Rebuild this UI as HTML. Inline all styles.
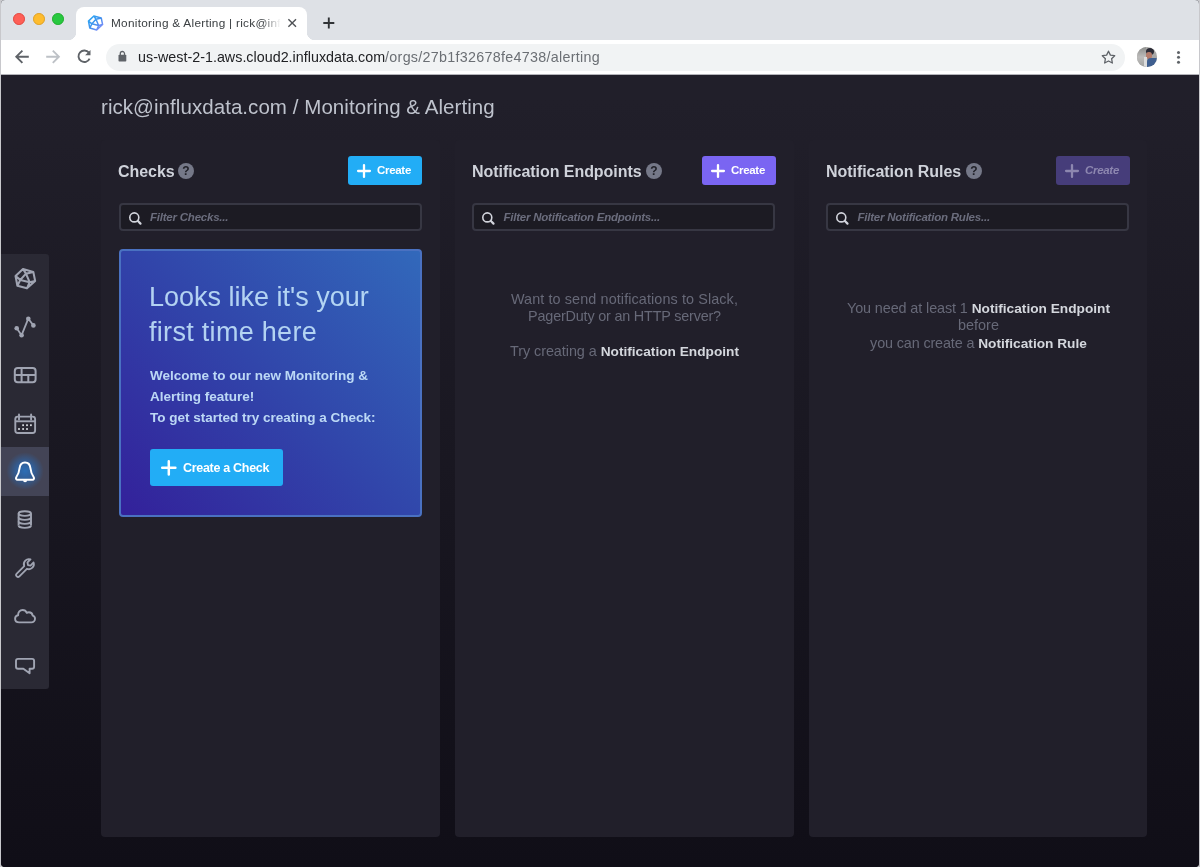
<!DOCTYPE html>
<html>
<head>
<meta charset="utf-8">
<title>Monitoring &amp; Alerting</title>
<style>
*{box-sizing:border-box;margin:0;padding:0}
html,body{width:1200px;height:867px;overflow:hidden;background:#c8c8cc;font-family:"Liberation Sans",sans-serif;}
.abs{position:absolute}
#win{position:absolute;left:1px;top:0;width:1198px;height:867px;overflow:hidden;border-radius:4px 4px 4px 4px;background:#0f0e15}
/* ---------- browser chrome ---------- */
#tabbar{position:absolute;left:0;top:0;width:1198px;height:40px;background:#dee1e6}
.tl{position:absolute;top:13.3px;width:11.7px;height:11.7px;border-radius:50%}
#tab{position:absolute;left:75px;top:7px;width:231px;height:33px;background:#fff;border-radius:8px 8px 0 0}
#tab:before,#tab:after{content:"";position:absolute;bottom:0;width:8px;height:8px;background:radial-gradient(circle at 0 0,transparent 8px,#fff 8.5px)}
#tab:before{left:-8px}
#tab:after{right:-8px;background:radial-gradient(circle at 100% 0,transparent 8px,#fff 8.5px)}
#tabtitle{position:absolute;left:35px;top:7.2px;width:172px;height:18px;overflow:hidden;white-space:nowrap;font-size:11.8px;color:#3c4043;line-height:18px;letter-spacing:0.27px}
#tabfade{position:absolute;left:186px;top:6px;width:22px;height:22px;background:linear-gradient(90deg,rgba(255,255,255,0),#fff 85%)}
#toolbar{position:absolute;left:0;top:40px;width:1198px;height:35px;background:#fff;border-bottom:1px solid #b4b4ba}
#toolbar svg.ico{z-index:2}
#omni{position:absolute;left:105px;top:3.5px;width:1019px;height:27px;border-radius:13.5px;background:#f1f3f4}
#url{position:absolute;left:32px;top:4px;font-size:14.3px;line-height:18px;color:#202124;white-space:nowrap;letter-spacing:0.02px}
#url span{color:#6b6f74;letter-spacing:0.29px}
/* ---------- page ---------- */
#page{position:absolute;left:0;top:75px;width:1198px;height:792px;background:linear-gradient(180deg,#211f2a 0%,#211f2a 3%,#100e17 100%)}
#title{position:absolute;left:100px;top:19px;font-size:20.5px;line-height:26px;color:#bec2cc;white-space:nowrap;letter-spacing:0.06px}
.panel{position:absolute;top:65px;width:339px;height:697px;background:#211f2a;border-radius:4px}
.ph{position:absolute;left:17px;top:21px;font-size:16px;font-weight:bold;color:#cfd2da;line-height:22px;white-space:nowrap;letter-spacing:-0.05px}
.q{position:absolute;top:23px;width:16px;height:16px;border-radius:50%;background:#757888;color:#202028;font-size:12px;font-weight:bold;text-align:center;line-height:16px}
.btn{position:absolute;top:16px;height:29px;border-radius:3px;color:#fff;font-size:11.5px;font-weight:bold;line-height:29.4px;white-space:nowrap;letter-spacing:-0.3px}
.filter{position:absolute;left:18px;top:63px;width:303px;height:28px;border:2px solid #373743;border-radius:4px;background:#1c1b23}
.filter span{position:absolute;left:29px;top:0;line-height:25px;font-size:11.5px;font-style:italic;font-weight:bold;color:#6b6d7d;white-space:nowrap;letter-spacing:-0.22px}
.empty{position:absolute;left:0;width:339px;text-align:center;font-size:14.4px;line-height:17.4px;color:#676978}
.empty b{color:#d4d7dd;font-size:13.7px}
/* sidebar */
#nav{position:absolute;left:0;top:179px;width:48px;height:434.5px;background:#2a2934;border-radius:0 3px 3px 0}

/* force grayscale AA */
#win{will-change:transform}
.ico{position:absolute;overflow:visible}
#card{position:absolute;left:18px;top:109px;width:303px;height:268px;border-radius:4px;border:2px solid #4a71c1;background:linear-gradient(45deg,#33209a 0%,#3145aa 50%,#3269bb 100%);background-origin:border-box}
#card h2{position:absolute;left:28px;top:29px;font-weight:normal;font-size:27px;line-height:34.5px;color:rgba(197,230,252,.88);white-space:nowrap}
#card p{position:absolute;left:29px;top:113.6px;font-size:13.5px;font-weight:bold;line-height:21.25px;color:rgba(200,229,252,.92);white-space:nowrap}
#cbtn{position:absolute;left:29px;top:198px;width:133px;height:37px;border-radius:3px;background:#22adf6;color:#fff;font-size:12.5px;font-weight:bold;line-height:38px;letter-spacing:-0.3px}
#cbtn span{position:absolute;left:33px;top:0}
#navact{position:absolute;left:0;top:193px;width:48px;height:48.5px;background:#434456}
#navglow{position:absolute;left:4px;top:197px;width:40px;height:40px;border-radius:50%;background:radial-gradient(circle,rgba(38,120,205,.8) 0%,rgba(38,112,195,.6) 30%,rgba(40,105,185,0) 66%)}
</style>
</head>
<body>
<div id="win">
  <div id="tabbar">
    <div class="tl" style="left:12px;background:#fe5f57;border:0.5px solid #e2463f"></div>
    <div class="tl" style="left:32px;background:#febc2e;border:0.5px solid #dfa023"></div>
    <div class="tl" style="left:51px;background:#28c840;border:0.5px solid #1dad2b"></div>
    <div id="tab">
      <div id="tabtitle">Monitoring &amp; Alerting | rick@influxdata.com</div>
      <div id="tabfade"></div>
    </div>
    <svg class="ico" style="left:0;top:0" width="340" height="40" viewBox="0 0 340 40"><defs><linearGradient id="fg" gradientUnits="userSpaceOnUse" x1="87" y1="15" x2="103" y2="31"><stop offset="0" stop-color="#22adf6"/><stop offset="0.5" stop-color="#4591ed"/><stop offset="1" stop-color="#9b8cff"/></linearGradient></defs><path d="M92.84 15.93 L100.27 18.06 L101.60 24.56 L95.69 29.93 L88.79 28.01 L87.47 21.11ZM94.96 19.32 L90.92 23.83 L97.62 25.49ZM92.84 15.93 L94.96 19.32 L100.27 18.06M101.60 24.56 L97.62 25.49 L95.69 29.93M88.79 28.01 L90.92 23.83 L87.47 21.11" fill="none" stroke="url(#fg)" stroke-width="1.5" stroke-linejoin="round"/><path d="M287.4 19.2L295 26.8M295 19.2L287.4 26.8" stroke="#505357" stroke-width="1.4" fill="none"/><path d="M327.8 17.5V28.5M322.3 23H333.3" stroke="#303336" stroke-width="1.9" fill="none"/></svg>
  </div>
  <div id="toolbar">
    <svg class="ico" style="left:0;top:0" width="1198" height="34" viewBox="0 0 1198 34"><path d="M27.8 16.7H15.6M21.4 10.6L15.3 16.7L21.4 22.8" stroke="#5f6368" stroke-width="1.9" fill="none"/><path d="M45.2 16.7H57.6M51.8 10.6L57.9 16.7L51.8 22.8" stroke="#bdc1c6" stroke-width="1.9" fill="none"/><path d="M87.9 12.7A5.8 5.8 0 1 0 88.6 18.6" stroke="#5f6368" stroke-width="1.9" fill="none"/><path d="M89.5 9.9V15.3H84.1Z" fill="#5f6368"/><rect x="117.5" y="14.8" width="7.8" height="6.8" rx="0.8" fill="#5f6368"/><path d="M119.3 15V13.6A2.1 2.1 0 0 1 123.5 13.6V15" stroke="#5f6368" stroke-width="1.3" fill="none"/><path d="M1107.5 11.2L1109.4 15.1L1113.7 15.7L1110.6 18.7L1111.35 23L1107.5 21L1103.65 23L1104.4 18.7L1101.3 15.7L1105.6 15.1Z" stroke="#5f6368" stroke-width="1.3" fill="none" stroke-linejoin="round"/><circle cx="1177.5" cy="12.5" r="1.5" fill="#5f6368"/><circle cx="1177.5" cy="17.3" r="1.5" fill="#5f6368"/><circle cx="1177.5" cy="22.2" r="1.5" fill="#5f6368"/></svg><div style="position:absolute;left:1136.2px;top:7px;width:19.6px;height:19.6px;border-radius:50%;overflow:hidden;background:#a9a8a6"><div style="position:absolute;left:0;top:0;width:9px;height:20px;background:linear-gradient(180deg,#8c8d8b,#bdbcbb 50%,#a3a3a1)"></div><div style="position:absolute;left:8.5px;top:1px;width:8px;height:7px;border-radius:50%;background:#2b2b36"></div><div style="position:absolute;left:9px;top:5px;width:6px;height:7px;border-radius:45%;background:#b47c6c"></div><div style="position:absolute;left:9.5px;top:11px;width:11px;height:9px;border-radius:4px 2px 0 0;background:#3f5f90"></div><div style="position:absolute;left:6.5px;top:10px;width:3.5px;height:10px;background:#dcdcdc"></div></div>
    <div id="omni">
      <div id="url">us-west-2-1.aws.cloud2.influxdata.com<span>/orgs/27b1f32678fe4738/alerting</span></div>
    </div>
  </div>
  <div id="page">
    <div id="title">rick@influxdata.com / Monitoring &amp; Alerting</div>

    <div class="panel" id="p1" style="left:100px">
      <div class="ph">Checks</div>
      <div class="q" style="left:77px">?</div>
      <div class="btn" style="left:247px;width:74px;background:#22adf6"><svg class="ico" style="left:8.8px;top:8.1px" width="14" height="14" viewBox="0 0 14 14"><path d="M7 1.1V12.9M1.1 7H12.9" stroke="currentColor" stroke-width="2.3" fill="none" stroke-linecap="round"/></svg><span style="position:absolute;left:29px">Create</span></div>
      <div class="filter"><svg class="ico" style="left:7px;top:6.5px" width="15" height="15" viewBox="0 0 15 15"><circle cx="6.3" cy="5.4" r="4.5" fill="none" stroke="#d2d4dc" stroke-width="1.6"/><path d="M9.9 9L12.5 11.6" stroke="#d2d4dc" stroke-width="2.2" stroke-linecap="round"/></svg><span>Filter Checks...</span></div>

      <div id="card">
        <h2>Looks like it's your<br><span style="letter-spacing:0.3px">first time here</span></h2>
        <p>Welcome to our new Monitoring &amp;<br>Alerting feature!<br>To get started try creating a Check:</p>
        <div id="cbtn"><svg class="ico" style="left:11.399999999999999px;top:10.8px" width="15.6" height="15.6" viewBox="0 0 15.6 15.6"><path d="M7.8 1.2V14.4M1.2 7.8H14.4" stroke="#fff" stroke-width="2.5" fill="none" stroke-linecap="round"/></svg><span>Create a Check</span></div>
      </div>
    </div>

    <div class="panel" id="p2" style="left:454px">
      <div class="ph">Notification Endpoints</div>
      <div class="q" style="left:191px">?</div>
      <div class="btn" style="left:247px;width:74px;background:#7a65f2"><svg class="ico" style="left:8.8px;top:8.1px" width="14" height="14" viewBox="0 0 14 14"><path d="M7 1.1V12.9M1.1 7H12.9" stroke="currentColor" stroke-width="2.3" fill="none" stroke-linecap="round"/></svg><span style="position:absolute;left:29px">Create</span></div>
      <div class="filter" style="left:17.4px"><svg class="ico" style="left:7px;top:6.5px" width="15" height="15" viewBox="0 0 15 15"><circle cx="6.3" cy="5.4" r="4.5" fill="none" stroke="#d2d4dc" stroke-width="1.6"/><path d="M9.9 9L12.5 11.6" stroke="#d2d4dc" stroke-width="2.2" stroke-linecap="round"/></svg><span>Filter Notification Endpoints...</span></div>
      <div class="empty" style="top:151px"><span style="letter-spacing:0.1px">Want to send notifications to Slack,</span><br><span style="letter-spacing:-0.19px">PagerDuty or an HTTP server?</span><br><br><span style="letter-spacing:-0.05px">Try creating a </span><b>Notification Endpoint</b></div>
    </div>

    <div class="panel" id="p3" style="left:808px;width:338.4px">
      <div class="ph">Notification Rules</div>
      <div class="q" style="left:157px">?</div>
      <div class="btn" style="left:247px;width:74px;background:#463d7a;color:#8d87b0;font-style:italic"><svg class="ico" style="left:8.8px;top:8.1px" width="14" height="14" viewBox="0 0 14 14"><path d="M7 1.1V12.9M1.1 7H12.9" stroke="currentColor" stroke-width="2.3" fill="none" stroke-linecap="round"/></svg><span style="position:absolute;left:29px">Create</span></div>
      <div class="filter" style="left:17.4px"><svg class="ico" style="left:7px;top:6.5px" width="15" height="15" viewBox="0 0 15 15"><circle cx="6.3" cy="5.4" r="4.5" fill="none" stroke="#d2d4dc" stroke-width="1.6"/><path d="M9.9 9L12.5 11.6" stroke="#d2d4dc" stroke-width="2.2" stroke-linecap="round"/></svg><span>Filter Notification Rules...</span></div>
      <div class="empty" style="top:160px"><span style="letter-spacing:-0.1px">You need at least 1 </span><b>Notification Endpoint</b><br>before<br><span style="letter-spacing:-0.14px">you can create a </span><b>Notification Rule</b></div>
    </div>

    <div id="nav"><div id="navact"></div><div id="navglow"></div><svg class="ico" style="left:0;top:0" width="48" height="434" viewBox="0 0 48 434"><g transform="translate(24.3 24.6) scale(0.92) translate(-24.3 -24.6)"><path d="M21.8 14.1 L33.0 17.3 L35.0 27.1 L26.1 35.2 L15.7 32.3 L13.7 21.9ZM25.0 19.2 L18.9 26.0 L29.0 28.5ZM21.8 14.1 L25.0 19.2 L33.0 17.3M35.0 27.1 L29.0 28.5 L26.1 35.2M15.7 32.3 L18.9 26.0 L13.7 21.9" fill="none" stroke="#a0a4b2" stroke-width="2.25" stroke-linejoin="round"/></g><path d="M15.7 74.2 L20.6 81.2 L27.3 64.7 L32.4 71.4" fill="none" stroke="#a0a4b2" stroke-width="1.8" stroke-linejoin="round"/><circle cx="15.7" cy="74.2" r="2.3" fill="#a0a4b2"/><circle cx="20.6" cy="81.2" r="2.3" fill="#a0a4b2"/><circle cx="27.3" cy="64.7" r="2.3" fill="#a0a4b2"/><circle cx="32.4" cy="71.4" r="2.3" fill="#a0a4b2"/><rect x="13.8" y="114" width="20.8" height="14.2" rx="3" fill="none" stroke="#a0a4b2" stroke-width="2"/><path d="M13.8 120.9H34.6M20.6 114V128.2M27.3 120.9V128.2" fill="none" stroke="#a0a4b2" stroke-width="2"/><rect x="14.3" y="162.6" width="19.8" height="16.4" rx="2.5" fill="none" stroke="#a0a4b2" stroke-width="1.9"/><path d="M14.3 167.3H34.1" stroke="#a0a4b2" stroke-width="1.9"/><path d="M18 160.4V165.6M30.1 160.4V165.6" stroke="#a0a4b2" stroke-width="1.9" stroke-linecap="round"/><rect x="21.2" y="170.3" width="1.8" height="1.8" fill="#d4d7dd"/><rect x="25.1" y="170.3" width="1.8" height="1.8" fill="#d4d7dd"/><rect x="29.0" y="170.3" width="1.8" height="1.8" fill="#d4d7dd"/><rect x="17.1" y="174.1" width="1.8" height="1.8" fill="#d4d7dd"/><rect x="21.2" y="174.1" width="1.8" height="1.8" fill="#d4d7dd"/><rect x="25.1" y="174.1" width="1.8" height="1.8" fill="#d4d7dd"/><path d="M24.0 208.4 C20.3 208.4 18.9 211.0 18.6 214.0 C18.2 217.6 17.6 220.0 15.4 223.0 C14.5 224.3 15.1 225.8 16.6 225.8 L31.4 225.8 C32.9 225.8 33.5 224.3 32.6 223.0 C30.4 220.0 29.8 217.6 29.4 214.0 C29.1 211.0 27.7 208.4 24.0 208.4Z" fill="none" stroke="#fff" stroke-width="2" stroke-linejoin="round"/><path d="M22.2 226.2H26V227.2Q24 229.2 22.2 227.2Z" fill="#fff"/><ellipse cx="23.8" cy="259.6" rx="6.2" ry="2.3" fill="none" stroke="#a0a4b2" stroke-width="1.9"/><path d="M17.6 263.6A6.2 2.3 0 0 0 30.0 263.6" fill="none" stroke="#a0a4b2" stroke-width="1.9"/><path d="M17.6 267.6A6.2 2.3 0 0 0 30.0 267.6" fill="none" stroke="#a0a4b2" stroke-width="1.9"/><path d="M17.6 271.6A6.2 2.3 0 0 0 30.0 271.6" fill="none" stroke="#a0a4b2" stroke-width="1.9"/><path d="M17.6 259.6V271.6M30.0 259.6V271.6" stroke="#a0a4b2" stroke-width="1.9"/><g transform="translate(23.8 314.2) rotate(45) scale(0.9)"><path d="M-2.1 10.6 A2.1 2.1 0 0 0 2.1 10.6 L2.1 -1.2 A5.6 5.6 0 0 0 5.6 -6.4 A5.6 5.6 0 0 0 2.4 -11.4 L2.4 -6.6 L0 -5 L-2.4 -6.6 L-2.4 -11.4 A5.6 5.6 0 0 0 -5.6 -6.4 A5.6 5.6 0 0 0 -2.1 -1.2 Z" fill="none" stroke="#a0a4b2" stroke-width="2" stroke-linejoin="round"/></g><path d="M18.2 368.4 C15.5 368.4 14.1 366.6 14.1 364.8 C14.1 362.8 15.6 361.4 17.1 361.2 C17.0 358.0 19.0 356.0 21.6 356.0 C23.4 356.0 25.0 357.0 25.8 358.8 C26.4 358.5 27.2 358.3 27.9 358.3 C30.0 358.3 31.4 359.8 31.7 361.6 C33.2 362.0 34.0 363.4 34.0 364.8 C34.0 366.8 32.4 368.4 30.4 368.4Z" fill="none" stroke="#a0a4b2" stroke-width="1.9" stroke-linejoin="round"/><path d="M17 404.9 H31.1 Q33.1 404.9 33.1 406.9 V412.7 Q33.1 414.7 31.1 414.7 H28.6 V419.2 L22.4 414.7 H17 Q15 414.7 15 412.7 V406.9 Q15 404.9 17 404.9Z" fill="none" stroke="#a0a4b2" stroke-width="1.9" stroke-linejoin="round"/></svg></div>
  </div>
</div>
</body>
</html>
